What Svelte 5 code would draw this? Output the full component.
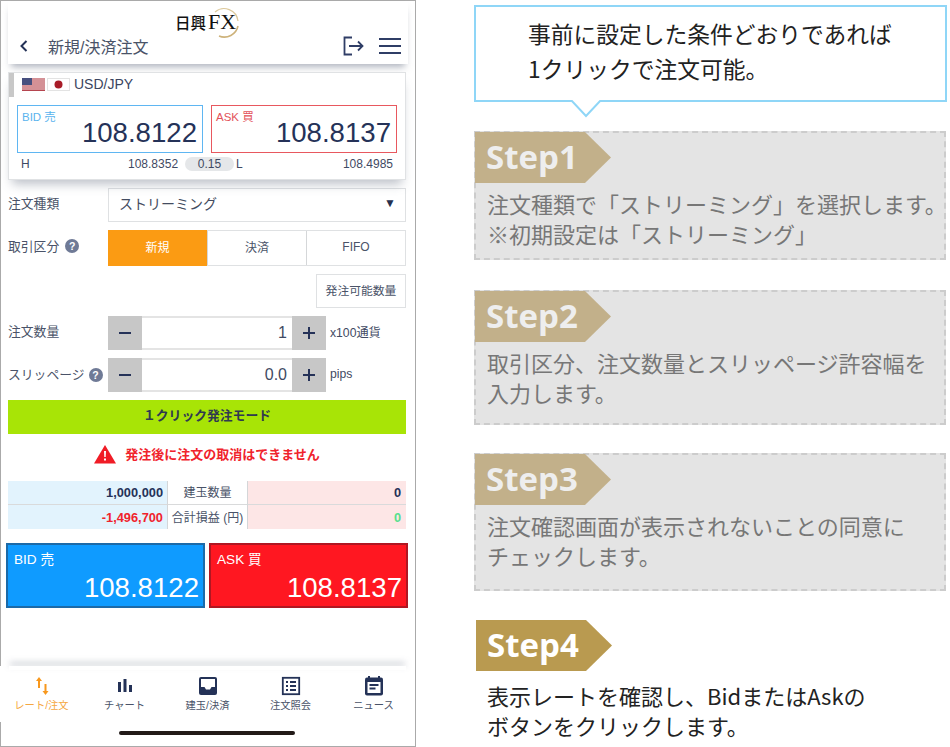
<script>
  const steps = [
    { n: 'Step1', h: 129, lines: ['注文種類で「ストリーミング」を選択します。', '※初期設定は「ストリーミング」'], mt: 29 },
    { n: 'Step2', h: 135, lines: ['取引区分、注文数量とスリッページ許容幅を', '入力します。'], mt: 30 },
    { n: 'Step3', h: 138, lines: ['注文確認画面が表示されないことの同意に', 'チェックします。'], mt: 28 }
  ];
</script>

<div class="page">
  <section class="phone">
    <header class="head">
      <div class="logo">
        <span class="kanji">日興</span><span class="fx">FX</span>
        <svg class="ring" viewBox="0 0 32 32" width="32" height="32" aria-hidden="true">
          <path d="M7 5 A14 14 0 0 1 30 14" fill="none" stroke="#dcc89a" stroke-width="1.2"/>
          <path d="M30 19 A14 14 0 0 1 11 29" fill="none" stroke="#cdb27a" stroke-width="1.6"/>
        </svg>
      </div>
      <div class="titlebar">
        <svg class="back" width="10" height="14" viewBox="0 0 10 14"><path d="M7.500 2 L2.500 7 L7.500 12" fill="none" stroke="#243257" stroke-width="2"/></svg>
        <span class="title">新規/決済注文</span>
        <svg class="exit" width="21" height="20" viewBox="0 0 21 20"><path d="M9 1.500 H1.500 V18.500 H9 M6 10 H19.500 M15 5.500 L19.500 10 L15 14.500" fill="none" stroke="#2f3d66" stroke-width="1.800"/></svg>
        <svg class="menu" width="22" height="18" viewBox="0 0 22 18"><path d="M0 2 H22 M0 9 H22 M0 16 H22" stroke="#2f3d66" stroke-width="1.800"/></svg>
      </div>
    </header>

    <div class="card">
      <i class="scroll"></i>
      <div class="pair">
        <svg width="23" height="13" viewBox="0 0 23 13">
          <rect width="23" height="13" fill="#f3dede"/>
          <path d="M0 1 H23 M0 3 H23 M0 5 H23 M0 7 H23 M0 9 H23 M0 11 H23 M0 12.500 H23" stroke="#b5454f" stroke-width="1"/>
          <rect width="10" height="7" fill="#47507f"/>
        </svg>
        <svg class="jp" width="23" height="13" viewBox="0 0 23 13">
          <rect x=".5" y=".5" width="22" height="12" fill="#fff" stroke="#e3e3e3"/>
          <circle cx="11.500" cy="6.500" r="4" fill="#a81c28"/>
        </svg>
        <span>USD/JPY</span>
      </div>
      <div class="quotes">
        <div class="quote bid"><small>BID 売</small><b>108.8122</b></div>
        <div class="quote ask"><small>ASK 買</small><b>108.8137</b></div>
      </div>
      <div class="hl">
        <span>H</span><span class="r">108.8352</span><span class="pill">0.15</span><span>L</span><span class="r">108.4985</span>
      </div>
    </div>

    <div class="form">
      <div class="row first">
        <span class="lab">注文種類</span>
        <div class="select"><span>ストリーミング</span><em>▼</em></div>
      </div>
      <div class="row seg-row">
        <span class="lab">取引区分 <i class="q">?</i></span>
        <div class="seg"><span class="on">新規</span><span>決済</span><span class="fifo">FIFO</span></div>
      </div>
      <div class="avail"><span>発注可能数量</span></div>
      <div class="row step-row">
        <span class="lab">注文数量</span>
        <div class="stepper"><span class="btn minus"></span><span class="val">1</span><span class="btn plus"></span></div>
        <span class="unit">x100通貨</span>
      </div>
      <div class="row step-row">
        <span class="lab slip">スリッページ <i class="q">?</i></span>
        <div class="stepper"><span class="btn minus"></span><span class="val">0.0</span><span class="btn plus"></span></div>
        <span class="unit">pips</span>
      </div>
    </div>

    <div class="mode">１クリック発注モード</div>
    <div class="warn">
      <svg width="22" height="20" viewBox="0 0 22 20"><path d="M11 1 L22 19.500 H0 Z" fill="#f01c26"/><path d="M10 7 H12 L11.700 13 H10.300 Z M10 14.500 H12 V16.500 H10 Z" fill="#fff"/></svg>
      <span>発注後に注文の取消はできません</span>
    </div>

    <div class="stats">
      <span class="cl n">1,000,000</span><span class="cm">建玉数量</span><span class="cr n">0</span>
      <span class="cl n red">-1,496,700</span><span class="cm">合計損益 (円)</span><span class="cr n green">0</span>
    </div>

    <div class="trade">
      <div class="tbtn tb"><small>BID 売</small><b>108.8122</b></div>
      <div class="tbtn ta"><small>ASK 買</small><b>108.8137</b></div>
    </div>

    <nav class="tabs">
      <div class="tab active">
        <svg width="24" height="20" viewBox="0 0 24 20"><path d="M8 12 V5 H6 L9 1 L12 5 H10 V12 Z M14.500 8 V15 H12.500 L15.500 19 L18.500 15 H16.500 V8 Z" fill="#f8981d"/></svg>
        <span>レート/注文</span>
      </div>
      <div class="tab">
        <svg width="24" height="20" viewBox="0 0 24 20"><path d="M5 6 H8 V16 H5 Z M10.500 3 H13.500 V16 H10.500 Z M16 9 H19 V16 H16 Z" fill="#243257"/></svg>
        <span>チャート</span>
      </div>
      <div class="tab">
        <svg width="24" height="20" viewBox="0 0 24 20"><rect x="3" y="1" width="18" height="18" rx="2" fill="#243257"/><path d="M5 3 H19 V11 H15.500 L14 13.500 H10 L8.500 11 H5 Z" fill="#fff"/></svg>
        <span>建玉/決済</span>
      </div>
      <div class="tab">
        <svg width="24" height="20" viewBox="0 0 24 20"><rect x="3.800" y="1.800" width="16.400" height="16.400" fill="none" stroke="#243257" stroke-width="1.800"/><path d="M7 6 H9 M11 6 H17 M7 10 H9 M11 10 H17 M7 14 H9 M11 14 H17" stroke="#243257" stroke-width="1.800"/></svg>
        <span>注文照会</span>
      </div>
      <div class="tab">
        <svg width="24" height="20" viewBox="0 0 24 20"><path d="M7 0 V3 M17 0 V3" stroke="#243257" stroke-width="2"/><rect x="3" y="1.500" width="18" height="18" rx="2" fill="#243257"/><path d="M5.500 6 H18.500 V17 H5.500 Z" fill="#fff"/><path d="M7.500 9 H16.500 M7.500 12.500 H13.500" stroke="#243257" stroke-width="1.800"/></svg>
        <span>ニュース</span>
      </div>
    </nav>
    <div class="home"></div>
  </section>

  <section class="guide">
    <div class="bubble">
      <p>事前に設定した条件どおりであれば<br>1クリックで注文可能。</p>
      <svg class="tail" width="32" height="20" viewBox="0 0 32 20"><path d="M1 0 L16 16 L31 0" fill="#fff" stroke="#8fd6f7" stroke-width="2"/></svg>
    </div>
    {#each steps as s}
      <div class="stepbox" style="height:{s.h}px;margin-top:{s.mt}px">
        <div class="badge faded">{s.n}</div>
        <p>{s.lines[0]}<br>{s.lines[1]}</p>
      </div>
    {/each}
    <div class="last">
      <div class="badge">Step4</div>
      <p>表示レートを確認し、BidまたはAskの<br>ボタンをクリックします。</p>
    </div>
  </section>
</div>

<style>
  :global(body) { margin: 0; background: #fff; }
  .page {
    width: 950px; height: 747px; display: flex; overflow: hidden; background: #fff;
    font-family: "Liberation Sans", "Noto Sans CJK JP", sans-serif;
  }
  .phone {
    box-sizing: border-box; width: 416px; height: 747px; flex: none;
    border: 1px solid #aaa; display: flex; flex-direction: column; background: #fff;
    color: #3a4560;
  }
  .head { height: 63px; margin: 0 7px; box-shadow: 0 6px 7px -3px rgba(95,105,125,.5); background: #fff; }
  .logo {
    position: relative; height: 36px; padding-top: 11px; box-sizing: border-box;
    display: flex; align-items: center; height: 34px; color: #111; white-space: nowrap; margin-left: 167px; padding-top: 8px;
  }
  .kanji { font: 500 15.500px/20px "Noto Sans CJK JP", sans-serif; }
  .fx { font: 22px/20px "Liberation Serif", serif; margin-left: 2px; }
  .ring { position: absolute; left: 33px; top: 6px; }
  .titlebar { display: flex; align-items: center; height: 24px; margin-top: -1px; padding-left: 11px; }
  .title { font-size: 16px; margin-left: 19px; color: #4a5368; }
  .exit { margin-left: auto; }
  .menu { margin: 0 7px 0 15px; }
  .card {
    position: relative; box-sizing: border-box; margin: 8px 9px 0 7px; height: 108px; width: 398px;
    border: 1px solid #e0e2e4; background: #fff; box-shadow: 0 8px 10px -4px rgba(95,105,125,.42);
  }
  .scroll { position: absolute; left: 0; top: 0; width: 5px; height: 24px; background: #c8c8c8; }
  .pair { display: flex; align-items: center; gap: 2px; height: 13px; margin: 5px 0 0 13px; font-size: 14px; color: #3a4560; }
  .pair span { margin: -2px 0 0 2px; }
  .quotes { display: flex; gap: 8px; margin: 14px 0 0 8px; }
  .quote {
    box-sizing: border-box; width: 186px; height: 48px; border: 1px solid; position: relative; display: flex; flex-direction: column;
  }
  .quote.bid { border-color: #5fb6f2; }
  .quote.ask { border-color: #e8585f; }
  .quote small { font-size: 11.500px; line-height: 13px; margin: 5px 0 0 4px; }
  .bid small { color: #5ab4ee; }
  .ask small { color: #e3525a; }
  .quote b { font-weight: 400; font-size: 27.600px; line-height: 28px; text-align: right; margin: -5px 5px 0 0; color: #253258; }
  .hl { display: grid; grid-template-columns: 107px 54px 50px 14px 1fr; align-items: center; font-size: 12px; height: 15px; margin: 3px 0 0 12px; padding-right: 12px; color: #3f4a63; }
  .hl .r { text-align: right; }
  .hl .pill { background: #e5e7e9; border-radius: 8px; text-align: center; line-height: 14px; margin-left: 3px; width: 49px; }
  .hl span:nth-child(2) { margin-right: 4px; }
  .hl span:nth-child(4) { margin-left: 4px; }
  .form { margin: 0 9px 0 7px; font-size: 12.800px; color: #4a5368; }
  .row { display: flex; align-items: center; }
  .row.first { margin-top: 8px; height: 34px; }
  .lab { width: 100px; flex: none; white-space: nowrap; display: flex; align-items: center; gap: 6px; line-height: 15px; padding-bottom: 4px; box-sizing: border-box; }
  .select {
    box-sizing: border-box; width: 298px; height: 34px; border: 1px solid #dfe1e3; display: flex; align-items: center;
    justify-content: space-between; padding: 0 9px 4px 10px; font-size: 14px; color: #444c60;
  }
  .select em { font-style: normal; font-size: 12px; color: #26304f; line-height: 14px; }
  .q { display: inline-block; width: 14px; height: 14px; border-radius: 50%; background: #6f7a96; color: #fff; font: 700 10.500px/14px "Liberation Sans", sans-serif; text-align: center; flex: none; }
  .seg-row { margin-top: 8px; height: 36px; }
  .seg { box-sizing: border-box; width: 298px; height: 36px; display: grid; grid-template-columns: 98px 99px 1fr; border: 1px solid #dfe1e3; font-size: 12px; }
  .seg span { display: flex; align-items: center; justify-content: center; border-left: 1px solid #d5d7d9; padding-bottom: 3px; }
  .seg span:first-child { border-left: 0; }
  .seg .on { background: #fb9b13; color: #fff; margin: -1px 0 -1px -1px; }
  .avail { display: flex; justify-content: flex-end; margin-top: 8px; }
  .avail span { box-sizing: border-box; width: 90px; height: 34px; border: 1px solid #dfe1e3; font-size: 11.800px; display: flex; align-items: center; justify-content: center; padding-bottom: 3px; }
  .step-row { margin-top: 8px; height: 34px; }
  .step-row .lab.slip { gap: 4px; padding-bottom: 1px; }
  .stepper {
    box-sizing: border-box; width: 218px; height: 34px; display: flex; border-top: 2px solid #e4e4e4; border-bottom: 2px solid #e4e4e4; background: #fff;
  }
  .btn { width: 34px; flex: none; background: #c7c7c7; margin: -2px 0; position: relative; }
  .btn::before { content: ""; position: absolute; left: 11px; right: 11px; top: 16px; height: 2px; background: #253258; }
  .plus::after { content: ""; position: absolute; left: 16px; top: 11px; bottom: 11px; width: 2px; background: #253258; }
  .val { flex: 1; text-align: right; font-size: 16px; line-height: 30px; padding-right: 5px; color: #3f4a63; }
  .unit { margin-left: 4px; font-size: 12.200px; color: #3f4a63; padding-bottom: 2px; }
  .mode {
    margin: 8px 9px 0 7px; height: 34px; background: #a8e406; text-align: center; font: 700 12.800px/31px "Liberation Sans", "Noto Sans CJK JP", sans-serif; color: #303a50;
  }
  .warn { display: flex; align-items: center; justify-content: center; gap: 9px; height: 20px; margin-top: 10px; padding-right: 2px; color: #f0232c; font-weight: 700; font-size: 13px; }
  .warn span { padding-bottom: 2px; }
  .stats {
    display: grid; grid-template-columns: 160px 79px 159px; grid-template-rows: 23px 25px; margin: 17px 9px 0 7px; font-size: 12px;
  }
  .stats span { display: flex; align-items: center; justify-content: flex-end; }
  .cl { background: #e2f3fd; padding-right: 4px; border-right: 1px solid #d4d6d8; font-weight: 700; color: #253258; font-size: 12.800px; }
  .cr { background: #fde6e6; padding-right: 5px; border-left: 1px solid #d4d6d8; font-weight: 700; color: #253258; font-size: 12.800px; }
  .stats span:nth-child(n+4) { border-top: 1px solid #d9dadb; }
  .stats .cm { justify-content: center; color: #4a5368; white-space: nowrap; padding-bottom: 2px; box-sizing: border-box; }
  .stats .red { color: #f0232c; }
  .stats .green { color: #57e08e; }
  .trade { display: flex; gap: 4px; margin: 14px 0 0 5px; }
  .tbtn { box-sizing: border-box; width: 199px; height: 65px; color: #fff; border: 2px solid; display: flex; flex-direction: column; }
  .tb { background: #0f9bff; border-color: #1c6aa8; }
  .ta { background: #ff1721; border-color: #b01722; }
  .tbtn small { font-size: 13.600px; line-height: 16px; margin: 7px 0 0 6px; }
  .tbtn b { font-weight: 400; font-size: 27.600px; line-height: 30px; text-align: right; margin: 5px 4px 0 0; }
  .tabs {
    margin: 58px 0 0 -1px; height: 56px; display: grid; grid-template-columns: repeat(5, 83px); position: relative; padding-top: 10px; box-sizing: border-box; background: #fff;
  }
  .tabs::before { content: ""; position: absolute; left: 9px; right: 9px; top: 0; height: 4px; background: transparent; box-shadow: 0 -4px 6px -1px rgba(95,105,125,.6); }
  .tab { display: flex; flex-direction: column; align-items: center; gap: 3px; font-size: 10.300px; color: #4a5368; line-height: 14px; white-space: nowrap; }
  .tab.active { color: #f5a742; }
  .home { width: 176px; height: 4px; border-radius: 2px; background: #221a18; margin: 9px 0 0 118px; }

  .guide { margin-left: 58px; width: 473px; color: #222; font-family: "Noto Sans CJK JP", "Liberation Sans", sans-serif; }
  .bubble { position: relative; box-sizing: border-box; margin-top: 5px; height: 97px; width: 473px; border: 2px solid #8fd6f7; background: #fff; }
  .bubble p { margin: 9px 0 0 52px; font-size: 22.750px; line-height: 35px; color: #222; white-space: nowrap; }
  .tail { position: absolute; left: 94px; bottom: -20px; }
  .stepbox { box-sizing: border-box; width: 472px; background: #e4e4e4; border: 2px dashed #ccc; color: #777; }
  .badge {
    width: 136px; height: 51px; background: #b99a50; color: #fff; font: 700 33px/49px "Open Sans", sans-serif; padding-left: 11px; box-sizing: border-box;
    clip-path: polygon(0 0, 110px 0, 100% 50%, 110px 100%, 0 100%);
  }
  .badge.faded { background: #c2b08a; color: #eee; margin: -1px 0 0 -1px; }
  .stepbox p { margin: 5px 0 0 11px; font-size: 22px; line-height: 30px; white-space: nowrap; }
  .last { margin: 29px 0 0 2px; }
  .last p { margin: 9px 0 0 11px; font-size: 22px; line-height: 30px; color: #222; white-space: nowrap; }
</style>
